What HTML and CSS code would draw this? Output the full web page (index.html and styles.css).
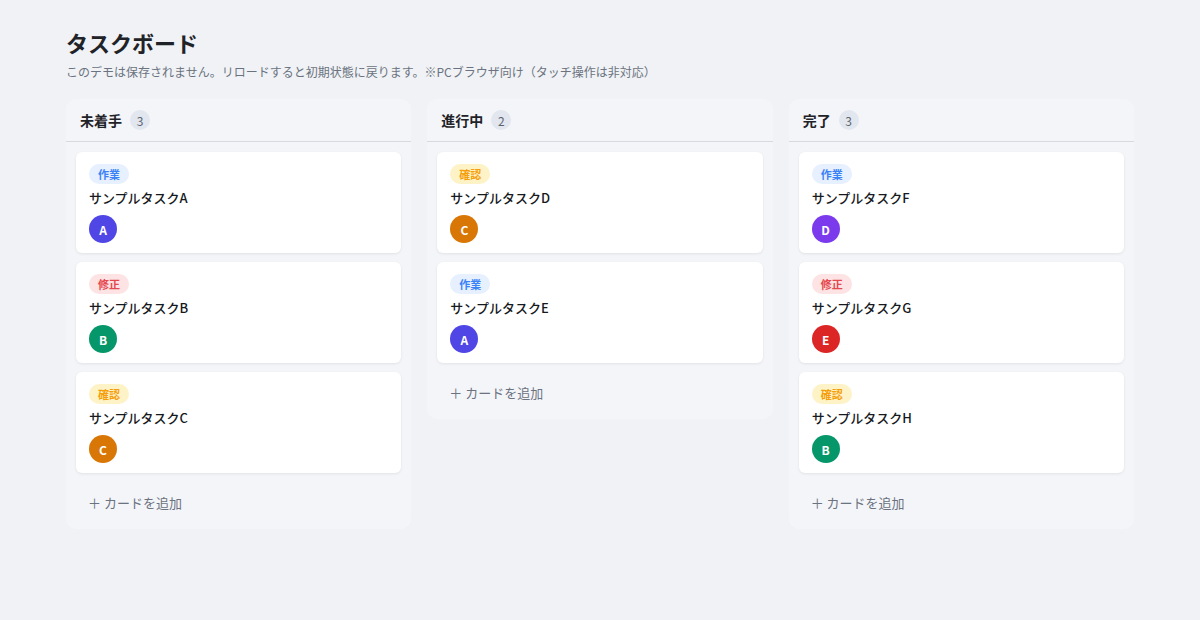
FILE: index.html
```html
<!DOCTYPE html>
<html lang="ja">
<head>
    <meta charset="UTF-8">
    <meta name="viewport" content="width=device-width, initial-scale=1.0">
    <title>タスクボード</title>
    <link rel="stylesheet" href="styles.css">
</head>
<body>
    <div class="page">
        <h1 class="title">タスクボード</h1>
        <p class="note">このデモは保存されません。リロードすると初期状態に戻ります。※PCブラウザ向け（タッチ操作は非対応）</p>

        <div class="board">
            <!-- 未着手 -->
            <section class="column">
                <div class="column-head">
                    <h2>未着手</h2>
                    <span class="count">3</span>
                </div>
                <div class="cards">
                    <div class="card">
                        <span class="tag tag-work">作業</span>
                        <div class="card-title">サンプルタスクA</div>
                        <span class="avatar av-a">A</span>
                    </div>
                    <div class="card">
                        <span class="tag tag-fix">修正</span>
                        <div class="card-title">サンプルタスクB</div>
                        <span class="avatar av-b">B</span>
                    </div>
                    <div class="card">
                        <span class="tag tag-check">確認</span>
                        <div class="card-title">サンプルタスクC</div>
                        <span class="avatar av-c">C</span>
                    </div>
                </div>
                <button class="add">＋ カードを追加</button>
            </section>

            <!-- 進行中 -->
            <section class="column">
                <div class="column-head">
                    <h2>進行中</h2>
                    <span class="count">2</span>
                </div>
                <div class="cards">
                    <div class="card">
                        <span class="tag tag-check">確認</span>
                        <div class="card-title">サンプルタスクD</div>
                        <span class="avatar av-c">C</span>
                    </div>
                    <div class="card">
                        <span class="tag tag-work">作業</span>
                        <div class="card-title">サンプルタスクE</div>
                        <span class="avatar av-a">A</span>
                    </div>
                </div>
                <button class="add">＋ カードを追加</button>
            </section>

            <!-- 完了 -->
            <section class="column">
                <div class="column-head">
                    <h2>完了</h2>
                    <span class="count">3</span>
                </div>
                <div class="cards">
                    <div class="card">
                        <span class="tag tag-work">作業</span>
                        <div class="card-title">サンプルタスクF</div>
                        <span class="avatar av-d">D</span>
                    </div>
                    <div class="card">
                        <span class="tag tag-fix">修正</span>
                        <div class="card-title">サンプルタスクG</div>
                        <span class="avatar av-e">E</span>
                    </div>
                    <div class="card">
                        <span class="tag tag-check">確認</span>
                        <div class="card-title">サンプルタスクH</div>
                        <span class="avatar av-b">B</span>
                    </div>
                </div>
                <button class="add">＋ カードを追加</button>
            </section>
        </div>
    </div>
</body>
</html>
```

FILE: styles.css
```css
body { margin: 0; background: #f0f2f5; color: #1f2328; font-family: "Noto Sans CJK JP", "Noto Sans", sans-serif; }
.page { max-width: 1100px; margin: 0 auto; padding: 26px 16px; box-sizing: border-box; }

.title { margin: 0; font-size: 22px; font-weight: 700; line-height: 32px; }
.note { margin: 5px 0 18px; font-size: 12px; color: #6b7280; line-height: 18px; }

.board { display: grid; grid-template-columns: repeat(3, 1fr); gap: 16px; align-items: start; }

.column { background: #f4f5f9; border-radius: 10px; padding-bottom: 7px; }
.column-head { display: flex; align-items: center; gap: 8px; padding: 10px 14px; border-bottom: 1px solid #d6d9e0; height: 22px; }
.column-head h2 { margin: 0; font-size: 14px; font-weight: 700; }
.count { display: inline-flex; align-items: center; justify-content: center; width: 20px; height: 20px; border-radius: 50%; background: #e2e6ee; color: #5b6470; font-size: 12px; }

.cards { display: flex; flex-direction: column; gap: 9px; padding: 10px 10px 0; }
.card { background: #fff; border-radius: 6px; box-shadow: 0 1px 3px rgba(0, 0, 0, 0.08); padding: 12px 13px 10px; display: flex; flex-direction: column; align-items: flex-start; }

.tag { font-size: 11px; font-weight: 700; line-height: 20px; padding: 0 9px; border-radius: 10px; }
.tag-work { background: #e7f0ff; color: #3b82f6; }
.tag-fix { background: #fde3e3; color: #e5484d; }
.tag-check { background: #fef3c7; color: #f59e0b; }

.card-title { font-size: 13px; font-weight: 500; margin: 5px 0 8px; line-height: 18px; color: #16191d; }

.avatar { display: inline-flex; align-items: center; justify-content: center; width: 28px; height: 28px; border-radius: 50%; color: #fff; font-size: 12px; font-weight: 700; }
.av-a { background: #4f46e5; }
.av-b { background: #059669; }
.av-c { background: #d97706; }
.av-d { background: #7c3aed; }
.av-e { background: #dc2626; }

.add { display: block; margin: 10px 10px 0; padding: 10px 12px; background: none; border: none; color: #6b7280; font-family: inherit; font-size: 13px; text-align: left; cursor: pointer; }
```
